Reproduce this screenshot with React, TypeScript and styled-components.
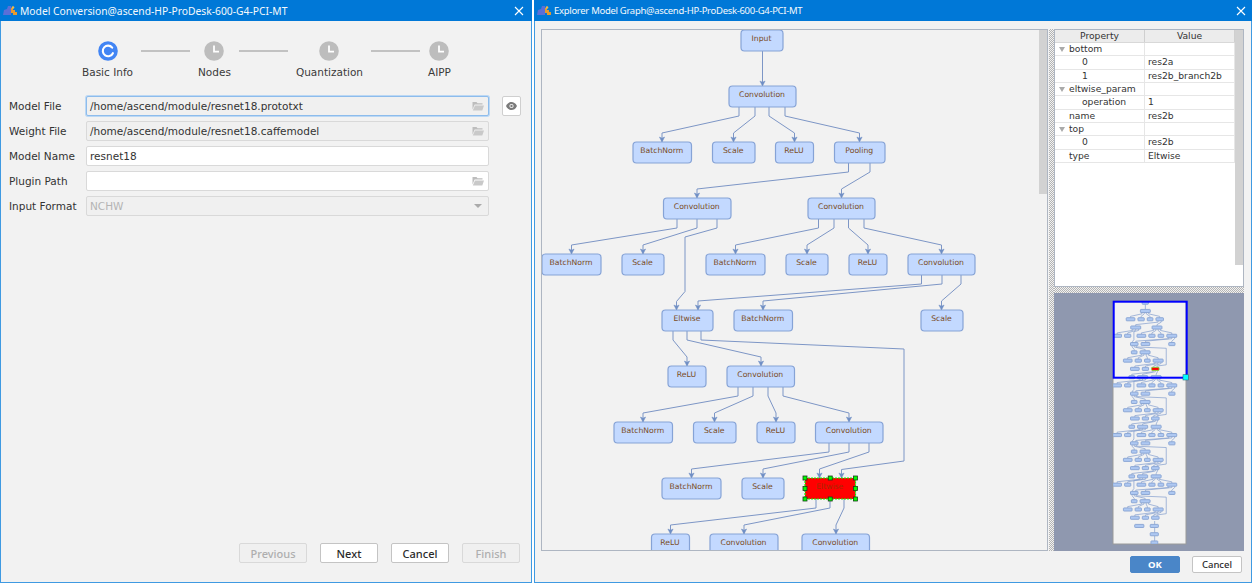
import React from 'react';
import styled, { createGlobalStyle } from 'styled-components';

const GlobalStyle = createGlobalStyle`
  html, body { margin: 0; padding: 0; background: #fff; overflow: hidden; }
  body { font-family: "DejaVu Sans", sans-serif; font-size: 10.5px; color: #333; }
`;

const Desktop = styled.div`
  display: flex;
  gap: 2px;
  width: 1252px;
  height: 583px;
`;

const Window = styled.div<{ $width: number }>`
  display: flex;
  flex-direction: column;
  width: ${(p) => p.$width}px;
  height: 583px;
  box-sizing: border-box;
  background: #f2f2f2;
  border: 1px solid #3f9ae2;
  border-top: none;
`;

const TitleBar = styled.div<{ $right: number }>`
  display: flex;
  align-items: center;
  flex: none;
  height: 21px;
  margin: 0 -1px;
  padding: 0 ${(p) => p.$right}px 0 3px;
  background: #0078d7;
  color: #f4f8fc;
  font-family: "Noto Sans", sans-serif;
`;

const TitleText = styled.span<{ $size: number; $track?: number }>`
  flex: 1;
  margin-left: 3px;
  font-size: ${(p) => p.$size}px;
  letter-spacing: ${(p) => p.$track ?? 0}px;
`;

const AppIcon = () => (
  <svg width="14" height="11" viewBox="0 0 14 11">
    <path d="M0 10 L1 5 L4 4 L5 1 L8 1 L8 10 Z" fill="#5a6fd8" />
    <path d="M8 3 h2 v2 h2 v2 h2 v3 h-4 v-2 h-2 Z" fill="#e59a2f" />
    <circle cx="10" cy="2.5" r="1.3" fill="#f2b94a" />
  </svg>
);

const CloseIcon = () => (
  <svg width="10" height="10" viewBox="0 0 10 10">
    <path d="M1 1 L9 9 M9 1 L1 9" stroke="#fff" strokeWidth="1.1" />
  </svg>
);

/* ---- left window ---- */

const Stepper = styled.div`
  display: flex;
  gap: 8px;
  padding: 20px 0 0 81px;
`;

const Step = styled.div`
  display: flex;
  flex-direction: column;
  align-items: center;
  gap: 5px;
  line-height: 13px;
  color: #3a3a3a;
`;

const StepLine = styled.div`
  flex: none;
  width: 49px;
  height: 2px;
  margin-top: 9px;
  background: #c2c2c2;
`;

const ActiveDot = () => (
  <svg width="20" height="20" viewBox="0 0 20 20">
    <circle cx="10" cy="10" r="9.8" fill="#4285f4" />
    <path d="M14.2 6.6 A5.3 5.3 0 1 0 14.9 12.2" fill="none" stroke="#fff" strokeWidth="2.1" strokeLinecap="round" />
  </svg>
);

const ClockDot = () => (
  <svg width="20" height="20" viewBox="0 0 20 20">
    <circle cx="10" cy="10" r="9.8" fill="#bdbdbd" />
    <path d="M10 4.5 V10.7 H15" fill="none" stroke="#fff" strokeWidth="1.8" />
  </svg>
);

const Form = styled.div`
  display: grid;
  grid-template-columns: 77px 403px 20px;
  grid-auto-rows: 20px;
  row-gap: 5px;
  padding: 17px 0 0 8px;
  align-items: center;
`;

const FieldLabel = styled.label`
  color: #333;
`;

const Field = styled.div<{ $tone: 'focus' | 'disabled' | 'normal' }>`
  display: flex;
  align-items: center;
  justify-content: space-between;
  height: 20px;
  box-sizing: border-box;
  padding: 0 4px 0 3px;
  border-radius: 2px;
  color: #333;
  background: ${(p) => (p.$tone === 'normal' ? '#fff' : '#f0f0f0')};
  border: 1px solid ${(p) => (p.$tone === 'focus' ? '#8dbcec' : '#d9d9d9')};
  ${(p) => p.$tone === 'focus' && 'box-shadow: 0 0 0 1px #bcd8f4;'}
`;

const Muted = styled.span`
  color: #b4b4b4;
`;

const EyeButton = styled.div`
  display: flex;
  align-items: center;
  justify-content: center;
  width: 19px;
  height: 20px;
  margin-left: 13px;
  box-sizing: border-box;
  background: #fff;
  border: 1px solid #cfcfcf;
  border-radius: 2px;
`;

const FolderIcon = () => (
  <svg width="12" height="10" viewBox="0 0 12 10">
    <path d="M0.5 1 H4.5 L5.5 2.2 H10.5 V3.6 H2.6 L0.5 8.5 Z" fill="#bdbdbd" />
    <path d="M3 4.4 H12 L10.3 9.5 H0.8 Z" fill="#c9c9c9" />
  </svg>
);

const EyeIcon = () => (
  <svg width="11" height="8" viewBox="0 0 11 8">
    <path d="M0 4 C1.5 1 3.5 0 5.5 0 C7.5 0 9.5 1 11 4 C9.5 7 7.5 8 5.5 8 C3.5 8 1.5 7 0 4 Z" fill="#7a7a7a" />
    <circle cx="5.5" cy="4" r="2.1" fill="#fff" />
    <circle cx="5.5" cy="4" r="1.2" fill="#7a7a7a" />
  </svg>
);

const Caret = styled.span`
  width: 0;
  height: 0;
  margin-right: 2px;
  border-left: 4px solid transparent;
  border-right: 4px solid transparent;
  border-top: 4px solid #aaa;
`;

const Footer = styled.div<{ $gap: number; $pad: string }>`
  display: flex;
  justify-content: flex-end;
  align-items: center;
  flex: none;
  gap: ${(p) => p.$gap}px;
  padding: ${(p) => p.$pad};
`;

const Button = styled.div<{ $w: number; $h?: number; $fs?: number; $kind?: 'disabled' | 'primary' }>`
  display: flex;
  align-items: center;
  justify-content: center;
  width: ${(p) => p.$w}px;
  height: ${(p) => p.$h ?? 20}px;
  box-sizing: border-box;
  border-radius: 2px;
  font-family: "Noto Sans", sans-serif;
  font-size: ${(p) => p.$fs ?? 11}px;
  font-weight: ${(p) => (p.$kind === 'primary' ? 700 : 500)};
  color: ${(p) => (p.$kind === 'disabled' ? '#aeaeae' : p.$kind === 'primary' ? '#fff' : '#2b2b2b')};
  background: ${(p) => (p.$kind === 'disabled' ? '#f0f0f0' : p.$kind === 'primary' ? '#4a86c8' : '#fff')};
  border: 1px solid ${(p) => (p.$kind === 'disabled' ? '#d9d9d9' : p.$kind === 'primary' ? '#4a86c8' : '#c4c4c4')};
`;

const Spacer = styled.div`
  flex: 1;
`;

/* ---- right window ---- */

const Workspace = styled.div`
  display: flex;
  flex: 1;
  min-height: 0;
  padding: 8px 7px 0 6px;
`;

const GraphPane = styled.div`
  position: relative;
  flex: none;
  width: 507px;
  height: 522px;
  box-sizing: border-box;
  background: #f2f2f2;
  border: 1px solid #aeb6c2;
  overflow: hidden;
`;

const GraphSvg = styled.svg`
  display: block;
`;

const ScrollThumb = styled.div<{ $h: number }>`
  position: absolute;
  top: 0;
  right: 0;
  width: 8px;
  height: ${(p) => p.$h}px;
  background: #d2d2d2;
`;

const VSplit = styled.div`
  flex: none;
  width: 5px;
  margin: 0 0 0 1px;
  background-image: repeating-conic-gradient(#b4b4b4 0 25%, #f2f2f2 0 50%);
  background-size: 2px 2px;
  height: 522px;
`;

const SideColumn = styled.div`
  display: flex;
  flex-direction: column;
  flex: none;
  width: 190px;
  height: 522px;
`;

const TablePane = styled.div`
  position: relative;
  flex: none;
  height: 258px;
  box-sizing: border-box;
  background: #fff;
  border: 1px solid #aeb6c2;
  padding-right: 8px;
`;

const TableTrack = styled.div`
  position: absolute;
  top: 0;
  right: 0;
  width: 8px;
  height: 235px;
  background: #d2d2d2;
`;

const HeaderRow = styled.div`
  display: grid;
  grid-template-columns: 90px 1fr;
  height: 12px;
  background: #ececec;
  border-bottom: 1px solid #d8d8d8;
`;

const HeaderCell = styled.div`
  font-size: 9.2px;
  line-height: 12px;
  text-align: center;
  color: #333;
  border-right: 1px solid #cfcfcf;
`;

const PropRow = styled.div`
  display: grid;
  grid-template-columns: 90px 1fr;
  height: 13.33px;
  box-sizing: border-box;
  border-bottom: 1px solid #e6e6e6;
`;

const PropCell = styled.div<{ $indent?: number }>`
  display: flex;
  align-items: center;
  font-size: 9.2px;
  line-height: 12px;
  color: #333;
  padding-left: ${(p) => p.$indent ?? 3}px;
  border-right: 1px solid #e6e6e6;
`;

const Twist = styled.span`
  width: 0;
  height: 0;
  margin: 0 4px 0 -10px;
  border-left: 3px solid transparent;
  border-right: 3px solid transparent;
  border-top: 5px solid #aaa;
`;

const HSplit = styled.div`
  flex: none;
  height: 6px;
  background-image: repeating-conic-gradient(#b4b4b4 0 25%, #f2f2f2 0 50%);
  background-size: 2px 2px;
`;

const MiniPane = styled.div`
  flex: none;
  height: 258px;
  background: #8f98af;
`;

/* ---- graph data, coordinates taken from the page origin ---- */

const NODE_H = 21;

type GNode = { label: string; l: number; r: number; t: number; selected?: boolean };
type GEdge = number[];

const row = (t: number, items: [string, number, number][]): GNode[] =>
  items.map(([label, l, r]) => ({ label, l, r, t }));

const NODES: GNode[] = [
  ...row(29.5, [['Input', 740.5, 782.5]]),
  ...row(85.5, [['Convolution', 728.5, 795.5]]),
  ...row(141.5, [['BatchNorm', 632.5, 691], ['Scale', 712, 754.5], ['ReLU', 775, 813], ['Pooling', 834, 884.5]]),
  ...row(197.5, [['Convolution', 663, 730.5], ['Convolution', 807.5, 874.5]]),
  ...row(253.5, [['BatchNorm', 541.5, 600.5], ['Scale', 621.5, 663.5], ['BatchNorm', 705.5, 764.5], ['Scale', 785.5, 827.5], ['ReLU', 848.5, 886.5], ['Convolution', 907.5, 974.5]]),
  ...row(309.5, [['Eltwise', 661.5, 712.5], ['BatchNorm', 733.5, 792], ['Scale', 920.5, 962.5]]),
  ...row(365.5, [['ReLU', 667.5, 705.5], ['Convolution', 726.5, 794]]),
  ...row(421.5, [['BatchNorm', 613.5, 672], ['Scale', 693, 735.5], ['ReLU', 756.5, 794.5], ['Convolution', 815, 882.5]]),
  ...row(477.5, [['BatchNorm', 661.5, 720.5], ['Scale', 741.5, 783.5]]),
  { label: 'Eltwise', l: 804.5, r: 855, t: 477.5, selected: true },
  ...row(533.5, [['ReLU', 651, 689], ['Convolution', 709.5, 777.5], ['Convolution', 801.5, 869]]),
];

// plain fan-out edge: down from the source, slanted run, down into the target
const fan = (x1: number, y1: number, x2: number, y2: number): GEdge => [x1, y1, x1, y1 + 9, x2, y2 - 9, x2, y2];

const EDGES: GEdge[] = [
  [762, 50.5, 762, 85.5],
  fan(738.5, 106.5, 661.5, 141.5), fan(754.5, 106.5, 733, 141.5), fan(768.5, 106.5, 794, 141.5), fan(784.5, 106.5, 859, 141.5),
  fan(848, 162.5, 696.5, 197.5), fan(869.5, 162.5, 841, 197.5),
  fan(676.5, 218.5, 571, 253.5), fan(696.5, 218.5, 642.5, 253.5),
  [716.5, 218.5, 716.5, 227.5, 684.5, 236.5, 684.5, 291, 676, 301, 676, 309.5],
  fan(818, 218.5, 735, 253.5), fan(833.5, 218.5, 806.5, 253.5), fan(848, 218.5, 867.5, 253.5), fan(863.5, 218.5, 941, 253.5),
  fan(921, 274.5, 697.5, 309.5), fan(941.5, 274.5, 762.5, 309.5), fan(960.5, 274.5, 941, 309.5),
  fan(672.5, 330.5, 686.5, 365.5), fan(686.5, 330.5, 760.5, 365.5),
  [700.5, 330.5, 700.5, 339.5, 903.5, 348.5, 903.5, 460.5, 841, 469, 841, 477.5],
  fan(737.5, 386.5, 642.5, 421.5), fan(752.5, 386.5, 714, 421.5), fan(767.5, 386.5, 775.5, 421.5), fan(782.5, 386.5, 848.5, 421.5),
  fan(828.5, 442.5, 691, 477.5), fan(848.5, 442.5, 762.5, 477.5), fan(868.5, 442.5, 819, 477.5),
  fan(815.5, 498.5, 670, 533.5), fan(829.5, 498.5, 743.5, 533.5), fan(843.5, 498.5, 835.5, 533.5),
];

// links between repeated blocks, only seen in the outline
const LINKS: GEdge[] = [
  fan(725, 554.5, 571, 589.5), fan(743.5, 554.5, 642.5, 589.5), [762, 554.5, 762, 564, 684.5, 572, 684.5, 627, 676, 637, 676, 645.5],
  fan(815, 554.5, 735, 589.5), fan(828, 554.5, 806.5, 589.5), fan(842, 554.5, 867.5, 589.5), fan(855, 554.5, 941, 589.5),
];

const handlePoints = (n: GNode) => {
  const xs = [n.l, (n.l + n.r) / 2, n.r];
  const ys = [n.t, n.t + NODE_H / 2, n.t + NODE_H];
  return xs.flatMap((x, i) => ys.filter((_, j) => i !== 1 || j !== 1).map((y) => [x, y]));
};

const NodeBox = styled.rect<{ $sel?: boolean }>`
  fill: ${(p) => (p.$sel ? '#ff0000' : '#c3d9ff')};
  stroke: ${(p) => (p.$sel ? '#00ff00' : '#86a3d6')};
  stroke-width: 1.2;
`;

const NodeText = styled.text<{ $sel?: boolean }>`
  font-family: "DejaVu Sans", sans-serif;
  font-size: 7.7px;
  fill: ${(p) => (p.$sel ? '#a62a00' : '#7a4c1e')};
  text-anchor: middle;
`;

const EdgeLine = styled.polyline`
  fill: none;
  stroke: #7d96c6;
  stroke-width: 1;
`;

const MainGraph = () => (
  <GraphSvg width="505" height="520" viewBox="541.5 29.5 505 520">
    {EDGES.map((p, i) => {
      const x = p[p.length - 2];
      const y = p[p.length - 1];
      return (
        <g key={i}>
          <EdgeLine points={p.join(' ')} />
          <polygon points={`${x - 2.6},${y - 5} ${x},${y - 3.8} ${x + 2.6},${y - 5} ${x},${y}`} fill="#6f8ec4" stroke="#6f8ec4" strokeWidth="0.5" />
        </g>
      );
    })}
    {NODES.map((n, i) => (
      <g key={i}>
        <NodeBox x={n.l} y={n.t} width={n.r - n.l} height={NODE_H} rx={n.selected ? 0 : 3.5} $sel={n.selected} strokeDasharray={n.selected ? '2 1' : undefined} />
        <NodeText x={(n.l + n.r) / 2 - 0.5} y={n.t + 11.3} $sel={n.selected}>{n.label}</NodeText>
      </g>
    ))}
    {NODES.filter((n) => n.selected).flatMap(handlePoints).map(([x, y], i) => (
      <rect key={i} x={x - 2} y={y - 2} width="4" height="4" fill="#00ff00" stroke="#1c3a1c" strokeWidth="0.8" />
    ))}
  </GraphSvg>
);

const BLOCK = 336;

const outlineNodes = (): GNode[] => {
  const repeated = NODES.filter((n) => n.t > 250);
  const out: GNode[] = [...NODES];
  [1, 2, 3].forEach((b) => {
    repeated
      .filter((n) => b < 3 || n.t < 500)
      .forEach((n) => out.push({ ...n, selected: false, t: n.t + b * BLOCK }));
  });
  out.push(
    { label: '', l: 690, r: 752, t: 1541, selected: false },
    { label: '', l: 795, r: 850, t: 1541, selected: false },
    { label: '', l: 795, r: 850, t: 1597, selected: false },
    { label: '', l: 800, r: 846, t: 1653, selected: false },
  );
  return out;
};

const outlineEdges = (): GEdge[] => {
  const repeated = EDGES.filter((e) => e[1] > 270);
  const shift = (e: GEdge, dy: number) => e.map((v, i) => (i % 2 ? v + dy : v));
  const out: GEdge[] = [...EDGES];
  [1, 2, 3].forEach((b) => {
    repeated.filter((e) => b < 3 || e[1] < 480).forEach((e) => out.push(shift(e, b * BLOCK)));
  });
  [0, 1, 2].forEach((b) => LINKS.forEach((e) => out.push(shift(e, b * BLOCK))));
  out.push([825, 1518, 825, 1541], [825, 1562, 825, 1597], [825, 1618, 825, 1653]);
  return out;
};

const MINI = { tx: 1032.8 - 1054, ty: 296.8 - 293, s: 0.1477 };

const Outline = () => (
  <svg width="190" height="258" viewBox="0 0 190 258" style={{ display: 'block' }}>
    <defs>
      <clipPath id="mini-page">
        <rect x="59" y="8" width="73" height="243" />
      </clipPath>
    </defs>
    <rect x="59" y="8" width="73" height="243" fill="#f2f2f2" stroke="#9a9a9a" strokeWidth="1" />
    <g clipPath="url(#mini-page)">
      <g transform={`translate(${MINI.tx} ${MINI.ty}) scale(${MINI.s})`}>
        {outlineEdges().map((p, i) => (
          <polyline key={i} points={p.join(' ')} fill="none" stroke="#88a1d0" strokeWidth="5" />
        ))}
        {outlineNodes().map((n, i) => (
          <rect
            key={i}
            x={n.l}
            y={n.t}
            width={n.r - n.l}
            height={NODE_H}
            rx="4"
            fill={n.selected ? '#ff0000' : '#aec8f2'}
            stroke={n.selected ? '#7fdc3a' : '#86a2d2'}
            strokeWidth="6"
          />
        ))}
      </g>
    </g>
    <rect x="59.7" y="8.7" width="73" height="76" fill="none" stroke="#0000ff" strokeWidth="2" />
    <rect x="129" y="81.7" width="5.3" height="5.3" fill="#00ffff" stroke="#2a6f80" strokeWidth="0.6" />
  </svg>
);

const PROPS: { name: string; value: string; indent: number; open?: boolean }[] = [
  { name: 'bottom', value: '', indent: 14, open: true },
  { name: '0', value: 'res2a', indent: 27 },
  { name: '1', value: 'res2b_branch2b', indent: 27 },
  { name: 'eltwise_param', value: '', indent: 14, open: true },
  { name: 'operation', value: '1', indent: 27 },
  { name: 'name', value: 'res2b', indent: 14 },
  { name: 'top', value: '', indent: 14, open: true },
  { name: '0', value: 'res2b', indent: 27 },
  { name: 'type', value: 'Eltwise', indent: 14 },
];

const STEPS = ['Basic Info', 'Nodes', 'Quantization', 'AIPP'];

export default function App() {
  return (
    <>
      <GlobalStyle />
      <Desktop>
        <Window $width={532}>
          <TitleBar $right={8}>
            <AppIcon />
            <TitleText $size={10.3}>Model Conversion@ascend-HP-ProDesk-600-G4-PCI-MT</TitleText>
            <CloseIcon />
          </TitleBar>
          <Stepper>
            {STEPS.map((s, i) => (
              <React.Fragment key={s}>
                {i > 0 && <StepLine />}
                <Step>
                  {i === 0 ? <ActiveDot /> : <ClockDot />}
                  {s}
                </Step>
              </React.Fragment>
            ))}
          </Stepper>
          <Form>
            <FieldLabel>Model File</FieldLabel>
            <Field $tone="focus">/home/ascend/module/resnet18.prototxt<FolderIcon /></Field>
            <EyeButton><EyeIcon /></EyeButton>

            <FieldLabel>Weight File</FieldLabel>
            <Field $tone="disabled">/home/ascend/module/resnet18.caffemodel<FolderIcon /></Field>
            <span />

            <FieldLabel>Model Name</FieldLabel>
            <Field $tone="normal">resnet18</Field>
            <span />

            <FieldLabel>Plugin Path</FieldLabel>
            <Field $tone="normal"><span /><FolderIcon /></Field>
            <span />

            <FieldLabel>Input Format</FieldLabel>
            <Field $tone="disabled"><Muted>NCHW</Muted><Caret /></Field>
            <span />
          </Form>
          <Spacer />
          <Footer $gap={13} $pad="0 11px 19px 0">
            <Button $w={68} $kind="disabled">Previous</Button>
            <Button $w={58}>Next</Button>
            <Button $w={58}>Cancel</Button>
            <Button $w={58} $kind="disabled">Finish</Button>
          </Footer>
        </Window>
        <Window $width={718}>
          <TitleBar $right={6}>
            <AppIcon />
            <TitleText $size={9.5} $track={-0.3}>Explorer Model Graph@ascend-HP-ProDesk-600-G4-PCI-MT</TitleText>
            <CloseIcon />
          </TitleBar>
          <Workspace>
            <GraphPane>
              <MainGraph />
              <ScrollThumb $h={164} />
            </GraphPane>
            <VSplit />
            <SideColumn>
              <TablePane>
                <TableTrack />
                <HeaderRow>
                  <HeaderCell>Property</HeaderCell>
                  <HeaderCell>Value</HeaderCell>
                </HeaderRow>
                {PROPS.map((p, i) => (
                  <PropRow key={i}>
                    <PropCell $indent={p.indent}>
                      {p.open && <Twist />}
                      {p.name}
                    </PropCell>
                    <PropCell>{p.value}</PropCell>
                  </PropRow>
                ))}
              </TablePane>
              <HSplit />
              <MiniPane>
                <Outline />
              </MiniPane>
            </SideColumn>
          </Workspace>
          <Footer $gap={12} $pad="0 9px 9px 0">
            <Button $w={50} $h={17} $fs={9.5} $kind="primary">OK</Button>
            <Button $w={50} $h={17} $fs={9.5}>Cancel</Button>
          </Footer>
        </Window>
      </Desktop>
    </>
  );
}
